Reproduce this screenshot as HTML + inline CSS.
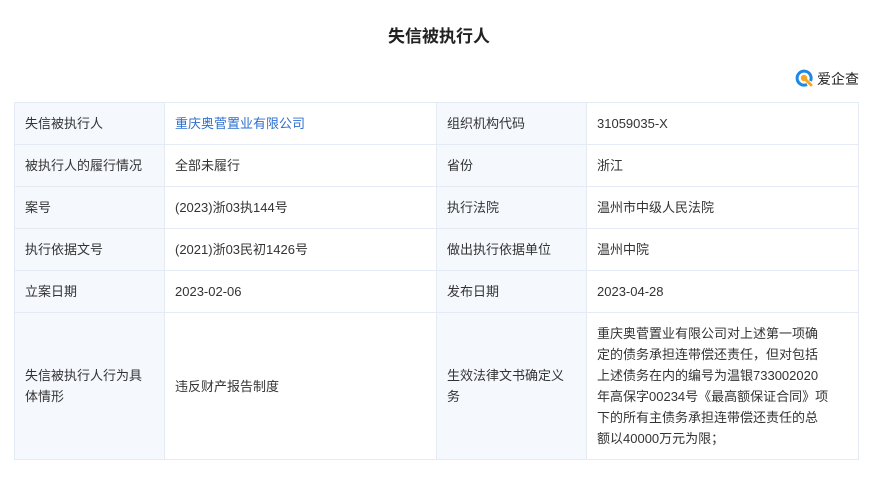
<html><head><style>
body{margin:0;background:#fff;font-family:"Liberation Sans","Noto Sans CJK SC",sans-serif;color:#333;}
h1{position:absolute;top:22px;left:0;width:878px;text-align:center;font-size:17px;font-weight:bold;margin:0;color:#222;}
.logo{position:absolute;left:795px;top:69px;font-size:14px;display:flex;align-items:center;color:#222}
table{position:absolute;left:14px;top:102px;width:845px;border-collapse:collapse;font-size:13px;table-layout:fixed}
td{border:1px solid #e4ebf5;padding:0 10px;height:42px;line-height:21px;box-sizing:border-box}
td.l{background:#f5f8fd;}
a{color:#2f6fd0;text-decoration:none}
</style></head><body>
<h1>失信被执行人</h1>
<div class="logo"><svg width="20" height="20" viewBox="0 0 20 20"><path d="M15.5 12 A7 7 0 1 0 12 15.5" fill="none" stroke="#1e88e5" stroke-width="3"/><circle cx="9" cy="9" r="3.2" fill="#f5a623"/><path d="M11 11 L16 16" stroke="#f5a623" stroke-width="3" stroke-linecap="round"/></svg><span style="margin-left:2px">爱企查</span></div>
<table>
<colgroup><col style="width:150px"><col style="width:272px"><col style="width:150px"><col></colgroup>
<tr><td class="l">失信被执行人</td><td><a>重庆奥菅置业有限公司</a></td><td class="l">组织机构代码</td><td>31059035-X</td></tr>
<tr><td class="l">被执行人的履行情况</td><td>全部未履行</td><td class="l">省份</td><td>浙江</td></tr>
<tr><td class="l">案号</td><td>(2023)浙03执144号</td><td class="l">执行法院</td><td>温州市中级人民法院</td></tr>
<tr><td class="l">执行依据文号</td><td>(2021)浙03民初1426号</td><td class="l">做出执行依据单位</td><td>温州中院</td></tr>
<tr><td class="l">立案日期</td><td>2023-02-06</td><td class="l">发布日期</td><td>2023-04-28</td></tr>
<tr><td class="l" style="height:147px;padding-right:22px">失信被执行人行为具体情形</td><td>违反财产报告制度</td><td class="l" style="padding-right:22px">生效法律文书确定义务</td><td style="padding:4px 28px 4px 10px">重庆奥菅置业有限公司对上述第一项确定的债务承担连带偿还责任，但对包括上述债务在内的编号为温银733002020年高保字00234号《最高额保证合同》项下的所有主债务承担连带偿还责任的总额以40000万元为限；</td></tr>
</table>
</body></html>
